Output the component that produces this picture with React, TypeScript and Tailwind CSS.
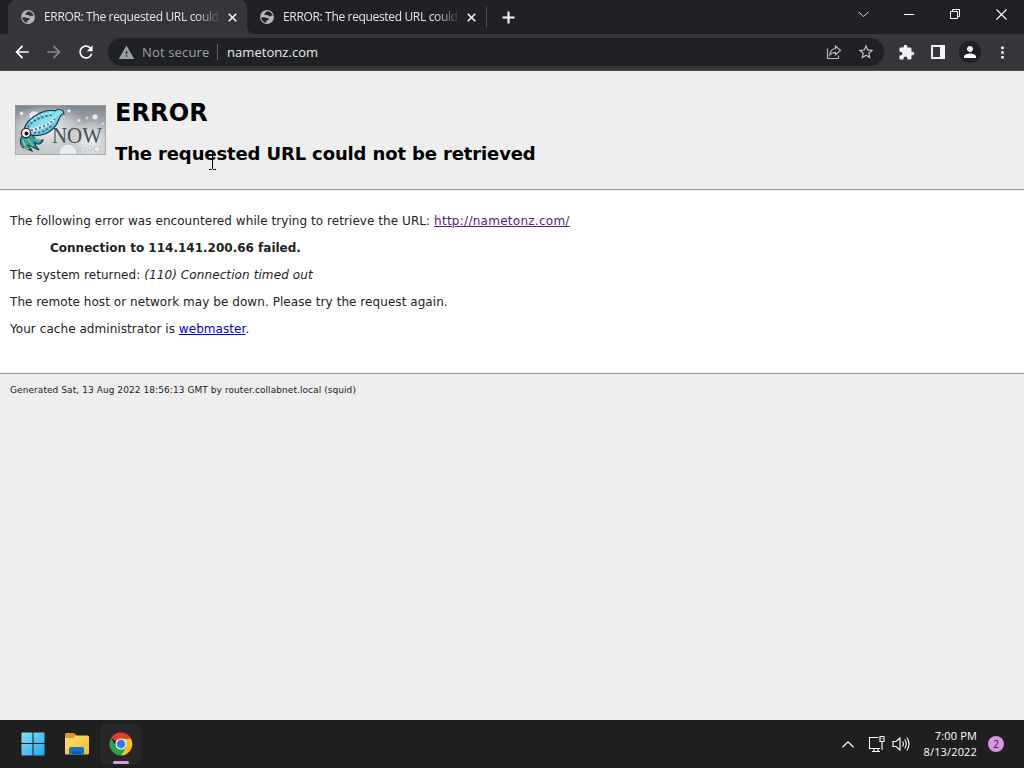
import type { ReactNode } from "react";
import {
  MdArrowBack,
  MdArrowForward,
  MdExtension,
  MdMoreVert,
  MdPerson,
  MdRefresh,
  MdStarBorder,
  MdWarning,
} from "react-icons/md";

const TAB_TITLE = "ERROR: The requested URL could";

function IconSlot({ children }: { children: ReactNode }) {
  return <span className="flex w-8 shrink-0 items-center justify-center">{children}</span>;
}

function GlobeIcon({ land }: { land: string }) {
  return (
    <svg className="shrink-0" width="16" height="16" viewBox="0 0 16 16">
      <circle cx="8" cy="8" r="6.9" fill="#b4b7bb" />
      <path
        d="M8.300 2.300C6.500 2.600 6.800 4 5.600 4.500 4.900 4.900 5.200 6 6.300 6h2.200c.9 0 .9 1.500 1.900 1.500 1.200 0 1.500-.9 3.200-.6C13.300 4.500 11.400 2.400 8.300 2.300z"
        fill={land}
      />
      <path
        d="M2.300 8.300c0 3 2.200 5.300 5 5.500v-1.500c0-.7.500-1 1.200-1 .8 0 1.200-.5 1.200-1.200S9.200 9 8.500 9H7.200C6.400 9 6.200 8.300 5.300 8.300z"
        fill={land}
      />
    </svg>
  );
}

function CloseIcon() {
  return (
    <svg width="9" height="9" viewBox="0 0 9 9" stroke="#f1f3f4" strokeWidth="1.6">
      <path d="M.7 .7l7.6 7.6M8.3 .7L.7 8.3" />
    </svg>
  );
}

function Tab({ active = false }: { active?: boolean }) {
  return (
    <div className={`relative flex h-full w-[239px] items-center pl-3 ${active ? "rounded-t-lg bg-[#35363a]" : ""}`}>
      <GlobeIcon land={active ? "#35363a" : "#202124"} />
      <span className="ml-2 w-[176px] shrink-0 whitespace-nowrap text-[12px] tracking-[-0.34px] text-[#e3e5e8] [mask-image:linear-gradient(to_right,black_152px,transparent_178px)]">
        {TAB_TITLE}
      </span>
      <span className="ml-2">
        <CloseIcon />
      </span>
      {active && (
        <svg className="absolute bottom-0 -right-2" width="8" height="8" fill="#35363a">
          <path d="M0 0v8h8a8 8 0 0 1-8-8z" />
        </svg>
      )}
    </div>
  );
}

function TabStrip() {
  return (
    <div className="flex h-[34px] shrink-0 bg-[#202124] pl-2">
      <Tab active />
      <Tab />
      <div className="flex flex-1 items-center">
        <span className="h-5 w-px bg-[#4c4e52]" />
        <svg className="ml-[15px]" width="13" height="13" viewBox="0 0 13 13" stroke="#fff" strokeWidth="2">
          <path d="M6.5 .5v12M.5 6.5h12" />
        </svg>
      </div>
      <div className="flex h-7 items-center">
        <span className="flex w-[46px] justify-center">
          <svg width="11" height="7" viewBox="0 0 11 7" fill="none" stroke="#d5d7da">
            <path d="M.5 .7l5 5 5-5" />
          </svg>
        </span>
        <span className="flex w-[46px] justify-center">
          <span className="h-px w-2.5 bg-white" />
        </span>
        <span className="flex w-[46px] justify-center">
          <svg width="10" height="10" viewBox="0 0 10 10" fill="none" stroke="#fff">
            <path d="M.5 2.5h7v7h-7zM2.5 2.5v-2h7v7h-2" />
          </svg>
        </span>
        <span className="flex w-[46px] justify-center">
          <svg width="11" height="11" viewBox="0 0 11 11" stroke="#fff" strokeWidth="1.1">
            <path d="M.5 .5l10 10M10.5 .5l-10 10" />
          </svg>
        </span>
      </div>
    </div>
  );
}

function Toolbar() {
  return (
    <div className="flex h-[37px] shrink-0 items-center border-b border-[#4a4b4f] bg-[#35363a] px-1.5">
      <IconSlot><MdArrowBack size={20} className="text-white" /></IconSlot>
      <IconSlot><MdArrowForward size={20} className="text-[#85878a]" /></IconSlot>
      <IconSlot><MdRefresh size={20} className="text-white" /></IconSlot>
      <div className="mx-1.5 flex h-7 flex-1 items-center rounded-full bg-[#202124] pl-[10px] pr-0.5">
        <MdWarning size={17} className="text-[#9aa0a6]" />
        <span className="ml-[7px] w-[67px] whitespace-nowrap pt-0.5 text-[13px] tracking-[0.15px] text-[#9aa0a6]">Not secure</span>
        <span className="ml-2 h-4 w-px bg-[#5f6368]" />
        <span className="ml-[9px] flex-1 pt-0.5 text-[13px] tracking-[0.05px] text-[#e8eaed]">nametonz.com</span>
        <IconSlot>
          <svg width="16" height="16" viewBox="0 0 16 16" fill="none" stroke="#b5b8bc" strokeWidth="1.2">
            <path d="M1.5 4.5v10h11v-3" />
            <path d="M9.5 2l5 4.400-5 4.300V8.300C7 8.300 5.200 9 3.800 10.800 4.200 7.300 6.200 5 9.500 4.500z" />
          </svg>
        </IconSlot>
        <IconSlot><MdStarBorder size={18} className="text-[#c0c3c7]" /></IconSlot>
      </div>
      <IconSlot><MdExtension size={17} className="text-[#f1f3f4]" /></IconSlot>
      <IconSlot>
        <svg width="14" height="14" viewBox="0 0 14 14">
          <path d="M0 0h14v14H0zM2 2v10h7V2z" fill="#f1f3f4" fillRule="evenodd" />
        </svg>
      </IconSlot>
      <IconSlot>
        <span className="flex size-[22px] items-center justify-center rounded-full bg-[#202124]">
          <MdPerson size={18} className="text-white" />
        </span>
      </IconSlot>
      <IconSlot><MdMoreVert size={19} className="text-[#f1f3f4]" /></IconSlot>
    </div>
  );
}

function SquidLogo() {
  return (
    <svg width="91" height="50" viewBox="0 0 91 50">
      <defs>
        <linearGradient id="water" x1="0" y1="0" x2="0" y2="1">
          <stop offset="0" stopColor="#7d8489" />
          <stop offset="0.4" stopColor="#aab0b5" />
          <stop offset="1" stopColor="#c6cacd" />
        </linearGradient>
        <radialGradient id="glow">
          <stop offset="0" stopColor="#f0f2f3" />
          <stop offset="1" stopColor="#f0f2f3" stopOpacity="0" />
        </radialGradient>
        <linearGradient id="skin" x1="0" y1="0" x2="1" y2="1">
          <stop offset="0" stopColor="#1b9aaa" />
          <stop offset="0.5" stopColor="#8ee6ee" />
          <stop offset="1" stopColor="#1786a0" />
        </linearGradient>
      </defs>
      <rect width="91" height="50" fill="url(#water)" />
      <ellipse cx="33" cy="23" rx="38" ry="25" fill="url(#glow)" />
      <ellipse cx="76" cy="35" rx="22" ry="20" fill="url(#glow)" />
      <g fill="#e8ebed" stroke="#a1a7ac" strokeWidth=".5">
        <circle cx="6.500" cy="8.500" r="2" />
        <circle cx="19" cy="11" r="5" />
        <circle cx="54" cy="6" r="1.800" />
        <circle cx="64" cy="15.500" r="1.800" />
        <circle cx="72" cy="13" r="1.300" />
        <circle cx="80" cy="12" r="2.800" />
        <circle cx="88" cy="18.500" r="1.500" />
        <circle cx="49" cy="13" r="1.300" />
        <circle cx="53" cy="48" r="9" />
        <circle cx="68" cy="45" r="2" />
        <circle cx="75" cy="43" r="2" />
        <circle cx="82" cy="44" r="3" />
      </g>
      {/* mantle and fin */}
      <path
        d="M9 25C10 18 17 12 25 8c6-3 12-3 15-2 2-2 6-2 8 0l1 3c-3 0-4 2-5 5-2 7-8 13-14 15-7 2-13 2-17 0z"
        fill="url(#skin)"
        stroke="#163b55"
        strokeWidth="1.200"
      />
      <path d="M13 22C18 15 27 11 39 10" stroke="#34479b" strokeWidth="1.600" strokeDasharray="2 2.200" fill="none" />
      <path d="M16 25c8-1 18-5 24-11" stroke="#f0e9fb" strokeWidth="2.800" fill="none" />
      <path d="M16 25c8-1 18-5 24-11M19 28c7 0 13-3 18-8" stroke="#41569f" strokeWidth="1.600" strokeDasharray="2 2.200" fill="none" />
      <path d="M16 16C22 11 29 8 37 8" stroke="#d8fbfc" strokeWidth="1.200" strokeDasharray="2.500 1.500" fill="none" />
      {/* tentacles */}
      <path
        d="M8 30c-4 4-3 11 1 13 2 1 5 1 8 3-1-3-3-4-4-6 4 1 6 3 11 5-3-3-4-5-5-8 3 3 7 3 9-2-3 1-8 0-11-5z"
        fill="#27a6b3"
        stroke="#173c4f"
        strokeWidth="1.100"
      />
      <path d="M8 35l2 6M13 34l5 7M9 43l5 1M20 34l6 2" stroke="#e4b75b" strokeWidth="1.100" fill="none" />
      <circle cx="11" cy="28" r="4.600" fill="#fff" stroke="#3b2920" strokeWidth="1.300" />
      <circle cx="11.500" cy="28.500" r="2" fill="#16110e" />
      <text
        x="37"
        y="38"
        textLength="50"
        lengthAdjust="spacingAndGlyphs"
        fill="#465058"
        className="font-['Liberation_Serif',serif] text-[24px]"
      >
        NOW
      </text>
      <rect x=".5" y=".5" width="90" height="49" fill="none" stroke="#9ba1a5" strokeOpacity=".7" />
    </svg>
  );
}

function ErrorPage() {
  return (
    <main className="flex flex-1 flex-col bg-[#eeeeee] font-['DejaVu_Sans',sans-serif] text-[12px] text-[#222]">
      <header className="relative flex h-[118px] shrink-0 pl-[15px] text-black">
        <div className="mt-[34px]">
          <SquidLogo />
        </div>
        <div className="ml-[9px] pt-6">
          <h1 className="h-9 text-2xl/9 font-bold tracking-[0.1px]">ERROR</h1>
          <h2 className="mt-[9px] whitespace-nowrap text-[18px]/7 font-bold tracking-[-0.13px]">
            The requested URL could not be retrieved
          </h2>
        </div>
        {/* text cursor over the heading */}
        <svg className="absolute left-[208px] top-[83px]" width="9" height="16" viewBox="0 0 9 16" fill="none" stroke="#000">
          <path d="M1 .5h2.500l1 1 1-1H8M4.500 1v14M1 15.500h2.500l1-1 1 1H8" />
        </svg>
      </header>
      <section className="h-[185px] shrink-0 border-y border-[#8e8e8e] bg-white px-2.5 pt-[18px] leading-[27px] tracking-[0.06px]">
        <p>
          The following error was encountered while trying to retrieve the URL:{" "}
          <a href="#" className="tracking-[0.27px] text-[#551a8b] underline">http://nametonz.com/</a>
        </p>
        <blockquote className="pl-10 font-bold tracking-normal">Connection to 114.141.200.66 failed.</blockquote>
        <p>
          The system returned: <i className="tracking-[0.1px]">(110) Connection timed out</i>
        </p>
        <p>The remote host or network may be down. Please try the request again.</p>
        <p>
          Your cache administrator is <a href="#" className="text-[#0000ee] underline">webmaster</a>.
        </p>
      </section>
      <footer className="px-2.5 pt-2 text-[9px]/4 tracking-[0.07px]">
        Generated Sat, 13 Aug 2022 18:56:13 GMT by router.collabnet.local (squid)
      </footer>
    </main>
  );
}

function WindowsIcon() {
  return (
    <svg width="24" height="24" viewBox="0 0 24 24">
      <defs>
        <linearGradient id="win" x1="0" y1="0" x2="1" y2="1">
          <stop offset="0" stopColor="#85e0fb" />
          <stop offset="1" stopColor="#23a5e8" />
        </linearGradient>
      </defs>
      <path d="M1 .5h10.500V11H.5V1zM12.500 .5H23l.5.5v10h-11zM.5 12h11v11.500H1L.5 23zM12.500 12h11v11l-.5.5H12.500z" fill="url(#win)" />
    </svg>
  );
}

function FolderIcon() {
  return (
    <svg width="26" height="24" viewBox="0 0 26 24">
      <defs>
        <linearGradient id="folder" x1="0" y1="0" x2="1" y2="1">
          <stop offset="0" stopColor="#ffdf72" />
          <stop offset="1" stopColor="#f8b932" />
        </linearGradient>
      </defs>
      <path d="M1 2.500Q1 1 2.500 1H9q1 0 2 1l2 2v4H1z" fill="#dc9b19" />
      <path d="M1 6h8l3-2.500h11.500q1.500 0 1.500 1.500v16q0 1.500-1.500 1.500h-21Q1 22.500 1 21z" fill="url(#folder)" />
      <path d="M5 22.500V17q0-2 2-2h11q2 0 2 2v5.500z" fill="#1474c4" />
      <path d="M8 22.500v-3h9v3z" fill="#0b5fa8" />
    </svg>
  );
}

function ChromeIcon() {
  return (
    <svg width="24" height="24" viewBox="0 0 24 24">
      <path d="M12 12L2.040 6.250A11.500 11.500 0 0 1 21.960 6.250L12 6.500z" fill="#e33b2e" />
      <path d="M12 6.500h9.960A11.500 11.500 0 0 1 12 23.500l4.800-8.700z" fill="#fbc116" />
      <path d="M2.040 6.250A11.500 11.500 0 0 0 12 23.500l4.800-8.700-9.500-.1z" fill="#2ba24c" />
      <circle cx="12" cy="12" r="5.600" fill="#fff" />
      <circle cx="12" cy="12" r="4.400" fill="#3b7ded" />
    </svg>
  );
}

function Taskbar() {
  return (
    <div className="flex h-12 shrink-0 items-center bg-[#1f1f1f] pl-3 pr-5 text-white">
      <div className="flex w-10 justify-center pl-0.5"><WindowsIcon /></div>
      <div className="ml-[5px] flex w-10 justify-center"><FolderIcon /></div>
      <div className="relative ml-1 flex size-10 items-center justify-center rounded border border-[#2c2c2c] bg-[#272727]">
        <ChromeIcon />
        <span className="absolute -bottom-px h-[3px] w-4 rounded-full bg-[#d79be0]" />
      </div>
      <div className="ml-auto flex items-center">
        <svg width="12" height="7" viewBox="0 0 12 7" fill="none" stroke="#fff" strokeWidth="1.200">
          <path d="M.5 6.300L6 .9l5.500 5.400" />
        </svg>
        <svg className="ml-[14px]" width="18" height="18" viewBox="0 0 18 18" fill="none" stroke="#fff" strokeWidth="1.100">
          <path d="M10.500 2.500h-9v11h10.500M4 16.500h8M6 13.500v3M10 13.500v3" />
          <path d="M12 1.500h4v5h-4zM14 6.500v8.500M13.500 3.500h1" />
        </svg>
        <svg className="ml-1.5" width="18" height="16" viewBox="0 0 18 16" fill="none" stroke="#fff" strokeWidth="1.100">
          <path d="M1 5.500h3L8 2v12l-4-3.500H1zM10.500 5.500q1.800 2.500 0 5M12.700 3.500q3.200 4.500 0 9M14.900 1.500q4.200 6.500 0 13" />
        </svg>
        <div className="ml-2.5 w-[57px] whitespace-nowrap text-right text-[11px]/4 tracking-[0.15px]">
          <div>7:00 PM</div>
          <div>8/13/2022</div>
        </div>
        <span className="ml-[11px] flex size-4 items-center justify-center rounded-full bg-[#d896e2] text-[10px] text-[#222]">2</span>
      </div>
    </div>
  );
}

export default function App() {
  return (
    <div className="flex h-[768px] w-[1024px] flex-col overflow-hidden font-['Open_Sans',sans-serif]">
      <TabStrip />
      <Toolbar />
      <ErrorPage />
      <Taskbar />
    </div>
  );
}
